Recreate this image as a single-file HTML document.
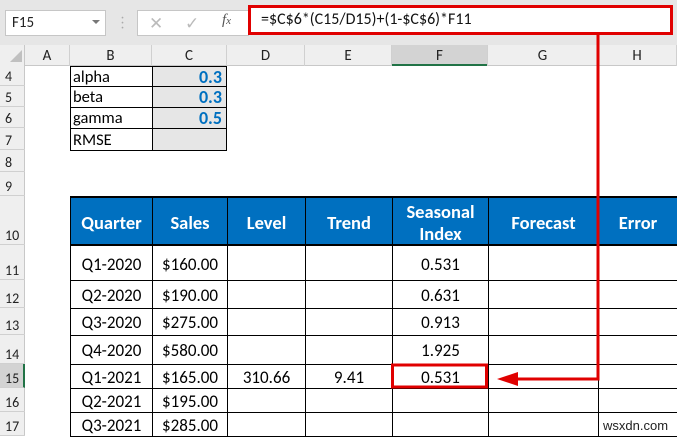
<!DOCTYPE html>
<html><head><meta charset="utf-8"><style>
*{margin:0;padding:0;box-sizing:border-box}
body{width:677px;height:436px;overflow:hidden;background:#fff;font-family:Calibri,"Liberation Sans",sans-serif;position:relative;font-size:14px;color:#000}
.a{position:absolute}
.c{position:absolute;display:flex;align-items:center;justify-content:center}
</style></head><body>
<div class="a" style="left:0;top:0;width:677px;height:45px;background:#e6e6e6"></div>
<div class="a" style="left:5px;top:10px;width:101px;height:26px;background:#fff;border:1px solid #c6c6c6"></div>
<div class="a" style="left:12px;top:14px;font-size:15px;color:#222">F15</div>
<div class="a" style="left:92px;top:20px;width:0;height:0;border-left:4px solid transparent;border-right:4px solid transparent;border-top:4px solid #777"></div>
<div class="a" style="left:121px;top:16px;color:#aaa;font-size:12px;line-height:5px">·<br>·<br>·</div>
<div class="a" style="left:137px;top:10px;width:112px;height:26px;background:#fff;border:1px solid #c6c6c6"></div>
<div class="a" style="left:149px;top:13px;color:#bbb;font-size:17px">✕</div>
<div class="a" style="left:185px;top:13px;color:#bbb;font-size:17px">✓</div>
<div class="a" style="left:222px;top:12px;color:#555;font-size:15px;font-style:italic;font-family:'Liberation Serif',serif">f<span style="font-size:11px">x</span></div>
<div class="a" style="left:250px;top:7px;width:422px;height:27px;background:#fff"></div>
<div class="a" style="left:261px;top:10px;font-size:16px;color:#111">=$C$6*(C15/D15)+(1-$C$6)*F11</div>
<div class="a" style="left:0;top:45px;width:677px;height:21px;background:#efefef;border-bottom:1px solid #c8c8c8"></div>
<div class="a" style="left:0;top:45px;width:25px;height:391px;background:#efefef;border-right:1px solid #c8c8c8"></div>
<div class="a" style="left:10px;top:50px;width:0;height:0;border-left:12px solid transparent;border-bottom:12px solid #c0c0c0"></div>
<div class="a" style="left:392px;top:45px;width:96px;height:21px;background:#d3d3d3;border-bottom:2px solid #217346"></div>
<div id="cols"></div>
<div id="rows"></div>
<div id="cells"></div>
<svg class="a" style="left:0;top:0" width="677" height="436">
<rect x="249.5" y="6.5" width="422" height="27" fill="none" stroke="#e00000" stroke-width="3"/>
<polyline points="598,34 598,379 512,379" fill="none" stroke="#e00000" stroke-width="3"/>
<polygon points="497,379 518,372 518,386" fill="#e00000"/>
<rect x="392.5" y="365" width="94" height="22" fill="none" stroke="#e00000" stroke-width="3"/>
</svg>
<div class="a" style="left:603px;top:418px;font-size:13px;font-family:'Liberation Sans',sans-serif;color:#222;background:rgba(255,255,255,.8)">wsxdn.com</div>
<script>
var cx=[25,70,152,227,305,392,488,598,677],cn="ABCDEFGH",h="";
for(var i=0;i<8;i++){h+='<div class="c" style="left:'+cx[i]+'px;top:45px;width:'+(cx[i+1]-cx[i])+'px;height:21px;border-right:1px solid #d0d0d0;font-size:15px;color:#222">'+cn[i]+'</div>';}
document.getElementById('cols').innerHTML=h;
var ry=[[4,66,86],[5,86,107],[6,107,128],[7,128,150],[8,150,172],[9,172,196],[10,196,245],[11,245,280],[12,280,308],[13,308,335],[14,335,364],[15,364,388],[16,388,412],[17,412,436]];
h="";
ry.forEach(function(r){var s=r[0]==15;h+='<div class="a" style="left:0;top:'+r[1]+'px;width:25px;height:'+(r[2]-r[1])+'px;border-bottom:1px solid #d0d0d0;'+(s?'background:#d3d3d3;border-right:2px solid #217346;':'')+'"><span class="a" style="left:5px;bottom:0px;font-size:14px;color:#222">'+r[0]+'</span></div>';});
document.getElementById('rows').innerHTML=h;
h="";
var p=[["alpha","0.3"],["beta","0.3"],["gamma","0.5"],["RMSE",""]];
for(var i=0;i<4;i++){var t=ry[i][1],H=ry[i][2]-t;
h+='<div class="a" style="left:70px;top:'+t+'px;width:83px;height:'+(H+1)+'px;border:1px solid #000;padding-left:2px;line-height:'+(H)+'px;font-size:16.5px">'+p[i][0]+'</div>';
h+='<div class="a" style="left:152px;top:'+t+'px;width:75px;height:'+(H+1)+'px;border:1px solid #000;background:#e6e6e6;text-align:right;padding-right:4px;line-height:'+H+'px;font-size:18px;font-weight:bold;color:#0070c0">'+p[i][1]+'</div>';}
var hd=["Quarter","Sales","Level","Trend","Seasonal<br>Index","Forecast","Error"];
var tx=[70,152,227,305,392,488,598,677];
for(var j=0;j<7;j++){h+='<div class="c" style="left:'+tx[j]+'px;top:196px;width:'+(tx[j+1]-tx[j]+1)+'px;height:50px;background:#0070c0;border:1px solid #000;border-top:2px solid #000;border-bottom:2px solid #000;color:#fff;font-weight:bold;font-size:18.5px;text-align:center;line-height:22px;padding-top:3px">'+hd[j]+'</div>';}
var d=[["Q1-2020","$160.00","","","0.531"],["Q2-2020","$190.00","","","0.631"],["Q3-2020","$275.00","","","0.913"],["Q4-2020","$580.00","","","1.925"],["Q1-2021","$165.00","310.66","9.41","0.531"],["Q2-2021","$195.00","","",""],["Q3-2021","$285.00","","",""]];
for(var i=0;i<7;i++){var r=ry[i+7],t=r[1],H=r[2]-r[1];
for(var j=0;j<7;j++){var v=d[i][j]||"";h+='<div class="c" style="left:'+tx[j]+'px;top:'+t+'px;width:'+(tx[j+1]-tx[j]+1)+'px;height:'+(H+1)+'px;border:1px solid #000;font-size:17px;padding-top:'+(H>30?3:1)+'px">'+v+'</div>';}}
document.getElementById('cells').innerHTML=h;
</script>
</body></html>
